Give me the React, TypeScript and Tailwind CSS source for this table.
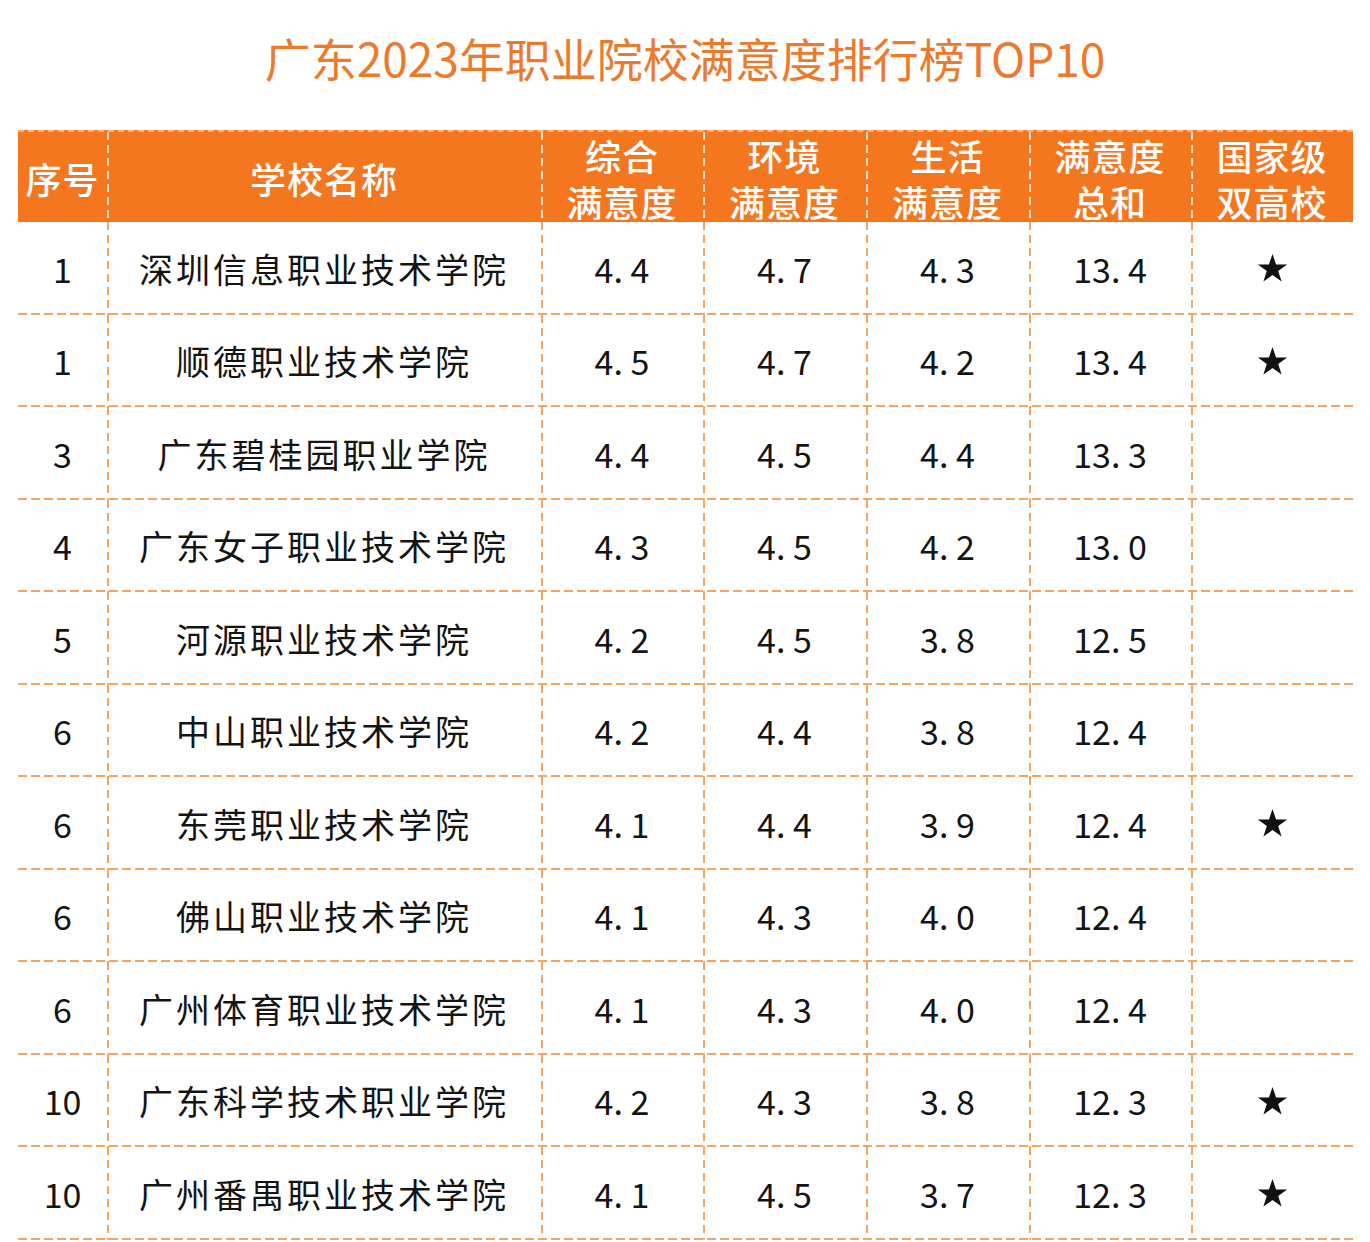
import React from "react";

type Row = {
	rank: string;
	name: string;
	overall: string;
	env: string;
	life: string;
	total: string;
	star: boolean;
};

const ROWS: Row[] = [
	{ rank: "1", name: "深圳信息职业技术学院", overall: "4. 4", env: "4. 7", life: "4. 3", total: "13. 4", star: true },
	{ rank: "1", name: "顺德职业技术学院", overall: "4. 5", env: "4. 7", life: "4. 2", total: "13. 4", star: true },
	{ rank: "3", name: "广东碧桂园职业学院", overall: "4. 4", env: "4. 5", life: "4. 4", total: "13. 3", star: false },
	{ rank: "4", name: "广东女子职业技术学院", overall: "4. 3", env: "4. 5", life: "4. 2", total: "13. 0", star: false },
	{ rank: "5", name: "河源职业技术学院", overall: "4. 2", env: "4. 5", life: "3. 8", total: "12. 5", star: false },
	{ rank: "6", name: "中山职业技术学院", overall: "4. 2", env: "4. 4", life: "3. 8", total: "12. 4", star: false },
	{ rank: "6", name: "东莞职业技术学院", overall: "4. 1", env: "4. 4", life: "3. 9", total: "12. 4", star: true },
	{ rank: "6", name: "佛山职业技术学院", overall: "4. 1", env: "4. 3", life: "4. 0", total: "12. 4", star: false },
	{ rank: "6", name: "广州体育职业技术学院", overall: "4. 1", env: "4. 3", life: "4. 0", total: "12. 4", star: false },
	{ rank: "10", name: "广东科学技术职业学院", overall: "4. 2", env: "4. 3", life: "3. 8", total: "12. 3", star: true },
	{ rank: "10", name: "广州番禺职业技术学院", overall: "4. 1", env: "4. 5", life: "3. 7", total: "12. 3", star: true },
];

const GRID = "grid grid-cols-[89px_434px_162px_163px_163px_162px_162px]";

// dashed separators drawn as background gradients (closer dash rhythm than border-dashed)
const V_LINE =
	"bg-[repeating-linear-gradient(to_bottom,#f2a661_0_8px,transparent_8px_13px)] bg-no-repeat bg-[length:2px_100%] bg-left";
const V_LINE_HEAD =
	"bg-[repeating-linear-gradient(to_bottom,#ffe2c8_0_8px,transparent_8px_13px)] bg-no-repeat bg-[length:2px_100%] bg-left";
const H_LINE =
	"bg-[repeating-linear-gradient(to_right,#f2a661_0_9px,transparent_9px_13px)] bg-no-repeat bg-[length:100%_2px] bg-bottom";

const FONT = "font-['Noto_Sans_CJK_SC','Noto_Sans',sans-serif]";

function Star() {
	return (
		<svg width="31" height="30" viewBox="0 0 24 23" aria-hidden>
			<path
				d="M12 0.6l2.75 8.15h8.6l-6.95 5.05 2.65 8.2L12 16.95 4.95 22l2.65-8.2L0.65 8.75h8.6z"
				fill="#111"
			/>
		</svg>
	);
}

function HeadCell({ lines, first }: { lines: string[]; first?: boolean }) {
	return (
		<div
			className={`flex flex-col items-center justify-center text-[36px] leading-[46px] font-medium tracking-[1px] text-white ${
				first ? "" : V_LINE_HEAD
			}`}
		>
			{lines.map((l) => (
				<span key={l} className="block h-[46px]">
					{l}
				</span>
			))}
		</div>
	);
}

function Cell({
	children,
	first,
	className = "",
}: {
	children?: React.ReactNode;
	first?: boolean;
	className?: string;
}) {
	return (
		<div
			className={`flex items-center justify-center ${first ? "" : V_LINE} ${className}`}
		>
			{children}
		</div>
	);
}

export default function App() {
	return (
		<div className={`min-h-[1242px] w-[1370px] bg-white ${FONT}`}>
			<div className="flex h-[130px] items-center justify-center pb-[16px]">
				<h1 className="text-[46px] leading-none font-normal text-[#ec7a2d]">
					广东2023年职业院校满意度排行榜TOP10
				</h1>
			</div>

			<div className="ml-[18px] w-[1335px]">
				<div className={`${GRID} h-[92px] border-t-2 border-dashed border-[#f9b37a] bg-[#f47720]`}>
					<HeadCell lines={["序号"]} first />
					<HeadCell lines={["学校名称"]} />
					<HeadCell lines={["综合", "满意度"]} />
					<HeadCell lines={["环境", "满意度"]} />
					<HeadCell lines={["生活", "满意度"]} />
					<HeadCell lines={["满意度", "总和"]} />
					<HeadCell lines={["国家级", "双高校"]} />
				</div>

				{ROWS.map((r, i) => (
					<div key={i} className={`${GRID} h-[92.5px] ${H_LINE} text-[34px] text-[#141414]`}>
						<Cell first>{r.rank}</Cell>
						<Cell className="tracking-[3px]">{r.name}</Cell>
						<Cell className="whitespace-pre">{r.overall}</Cell>
						<Cell className="whitespace-pre">{r.env}</Cell>
						<Cell className="whitespace-pre">{r.life}</Cell>
						<Cell className="whitespace-pre">{r.total}</Cell>
						<Cell>{r.star ? <Star /> : null}</Cell>
					</div>
				))}
			</div>
		</div>
	);
}
